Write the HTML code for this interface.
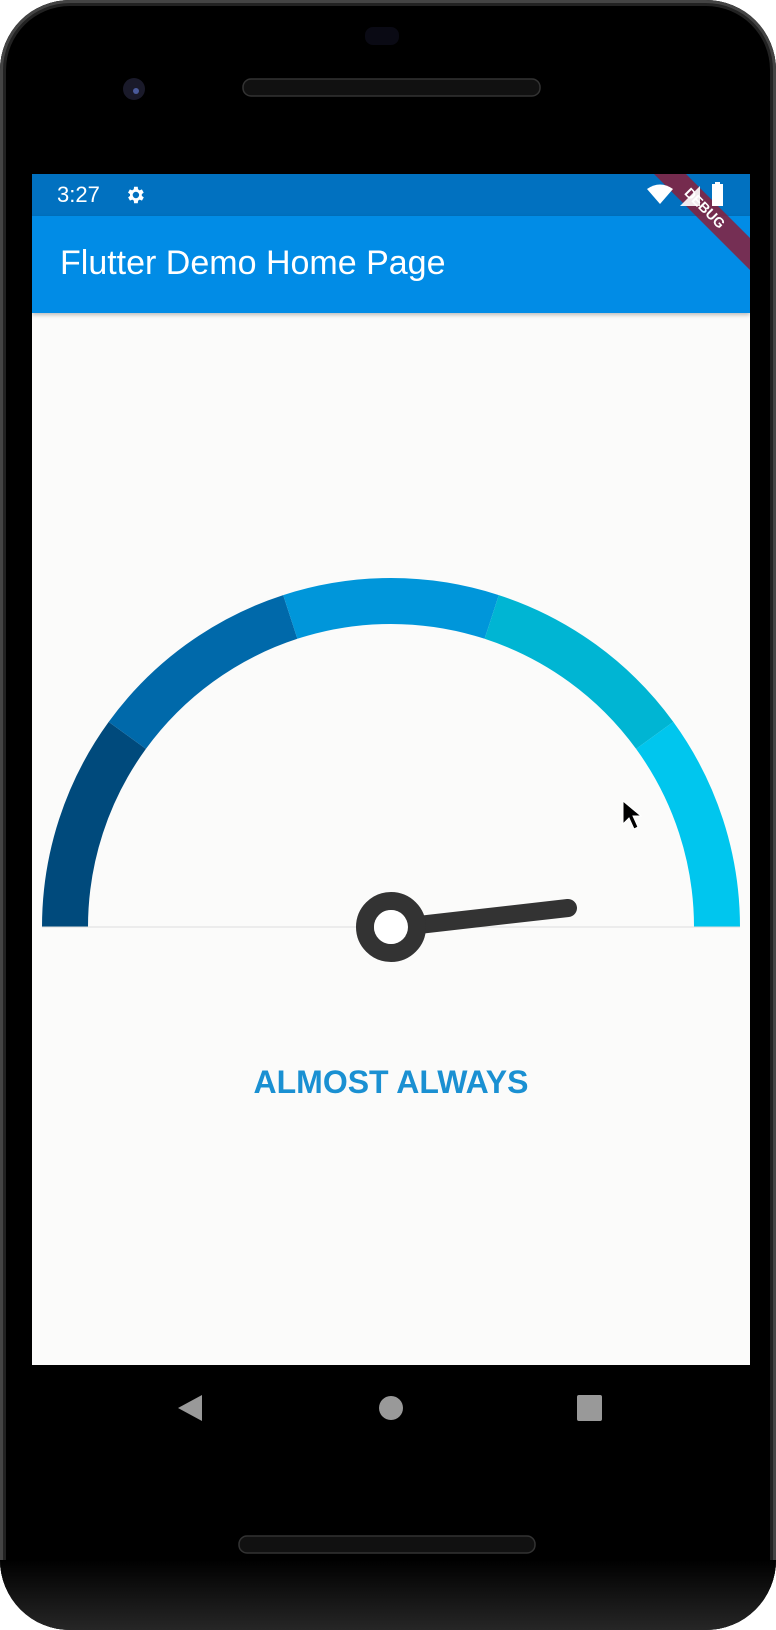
<!DOCTYPE html>
<html><head><meta charset="utf-8"><style>
html,body{margin:0;padding:0;width:776px;height:1630px;overflow:hidden;background:#fff;font-family:"Liberation Sans",sans-serif}
.phone{position:absolute;left:0;top:0;width:776px;height:1630px;background:#000;border-radius:70px;box-shadow:inset 0 0 0 3px #444,inset 0 0 0 6px #222;}
.bottom{position:absolute;left:0;top:1560px;width:776px;height:70px;background:linear-gradient(#000,#262626);border-radius:0 0 70px 70px}
.screen{position:absolute;left:32px;top:174px;width:718px;height:1191px;background:#fbfbfa;overflow:hidden}
.status{position:absolute;left:0;top:0;width:718px;height:42px;background:#0171c0}
.appbar{position:absolute;left:0;top:42px;width:718px;height:97px;background:#018ce6;box-shadow:0 2px 4px rgba(0,0,0,.25)}
.title{position:absolute;left:28px;top:28px;color:#fff;font-size:34px}
.time{position:absolute;left:25px;top:8px;color:#fff;font-size:22px}
.label{position:absolute;left:0;width:718px;top:890px;text-align:center;color:#1a90d2;font-size:32px;font-weight:bold}
</style></head><body>
<div class="phone"></div>
<div class="bottom"></div>
<svg style="position:absolute;left:0;top:0" width="776" height="1630">
<rect x="243" y="79" width="297" height="17" rx="8" fill="#111" stroke="#333" stroke-width="1.5"/>
<rect x="365" y="27" width="34" height="18" rx="8" fill="#0a0a14"/>
<circle cx="134" cy="89" r="11" fill="#1a1a2a"/><circle cx="136" cy="91" r="3" fill="#4a5a9a"/>
<rect x="239" y="1536" width="296" height="17" rx="8" fill="#111" stroke="#333" stroke-width="1.5"/>
<polygon points="202,1395 178,1408 202,1421" fill="#999"/>
<ellipse cx="391" cy="1408" rx="12" ry="12" fill="#999"/>
<rect x="577" y="1395" width="25" height="26" rx="2" fill="#999"/>
</svg>
<div class="screen">
<div class="status"><div class="time">3:27</div>
<svg style="position:absolute;left:92px;top:10px" width="22" height="22" viewBox="0 0 24 24"><path fill="#fff" d="M19.4 13a7.5 7.5 0 0 0 0-2l2.1-1.6-2-3.5-2.5 1a7 7 0 0 0-1.7-1L15 3h-4l-.4 2.9a7 7 0 0 0-1.7 1l-2.5-1-2 3.5L6.6 11a7.5 7.5 0 0 0 0 2l-2.1 1.6 2 3.5 2.5-1a7 7 0 0 0 1.7 1L11 21h4l.4-2.9a7 7 0 0 0 1.7-1l2.5 1 2-3.5zM13 15.5a3.5 3.5 0 1 1 0-7 3.5 3.5 0 0 1 0 7z"/></svg>
</div>
<div class="appbar"><div class="title">Flutter Demo Home Page</div></div>
<svg style="position:absolute;left:0;top:0" width="718" height="140"><polygon points="622,0 654,0 718,64 718,96" fill="#8a1f3a" opacity="0.85"/>
<text x="0" y="5" transform="translate(673,34) rotate(45)" text-anchor="middle" fill="#fff" font-family="Liberation Sans" font-weight="bold" font-size="14">DEBUG</text></svg>
<svg style="position:absolute;left:615px;top:10px" width="28" height="22"><path d="M0 5 Q13 -4 26 5 L13 20Z" fill="#fff"/></svg>
<svg style="position:absolute;left:646px;top:10px" width="24" height="24"><path d="M2 22 L22 2 L22 22Z" fill="#fff" opacity="0.9"/></svg>
<svg style="position:absolute;left:680px;top:8px" width="12" height="26"><rect x="3" y="0" width="5" height="3" fill="#fff"/><rect x="0" y="2" width="11" height="22" fill="#fff"/></svg>
<svg style="position:absolute;left:0;top:0" width="718" height="1191">
<g transform="translate(359,753)">
<path d="M-349 0 A349 349 0 0 1 -282.3 -205.1 L-245.1 -178.1 A303 303 0 0 0 -303 0Z" fill="#004a7c"/>
<path d="M-282.3 -205.1 A349 349 0 0 1 -107.8 -331.9 L-93.6 -288.2 A303 303 0 0 0 -245.1 -178.1Z" fill="#0069aa"/>
<path d="M-107.8 -331.9 A349 349 0 0 1 107.8 -331.9 L93.6 -288.2 A303 303 0 0 0 -93.6 -288.2Z" fill="#0096da"/>
<path d="M107.8 -331.9 A349 349 0 0 1 282.3 -205.1 L245.1 -178.1 A303 303 0 0 0 93.6 -288.2Z" fill="#00b5d3"/>
<path d="M282.3 -205.1 A349 349 0 0 1 349 0 L303 0 A303 303 0 0 0 245.1 -178.1Z" fill="#00c6ee"/>
<line x1="-349" y1="0" x2="349" y2="0" stroke="#ddd" stroke-width="1"/>
<line x1="10" y1="0" x2="177" y2="-19" stroke="#333" stroke-width="18" stroke-linecap="round"/>
<circle cx="0" cy="0" r="26" fill="none" stroke="#333" stroke-width="18"/>
<circle cx="0" cy="0" r="17" fill="#fff"/>
</g>
<path d="M591 627 L591 650 L597 644 L602 655 L606 653 L601 642 L609 642Z" fill="#000" stroke="#fff" stroke-width="1"/>
</svg>
<div class="label">ALMOST ALWAYS</div>
</div>
</body></html>
